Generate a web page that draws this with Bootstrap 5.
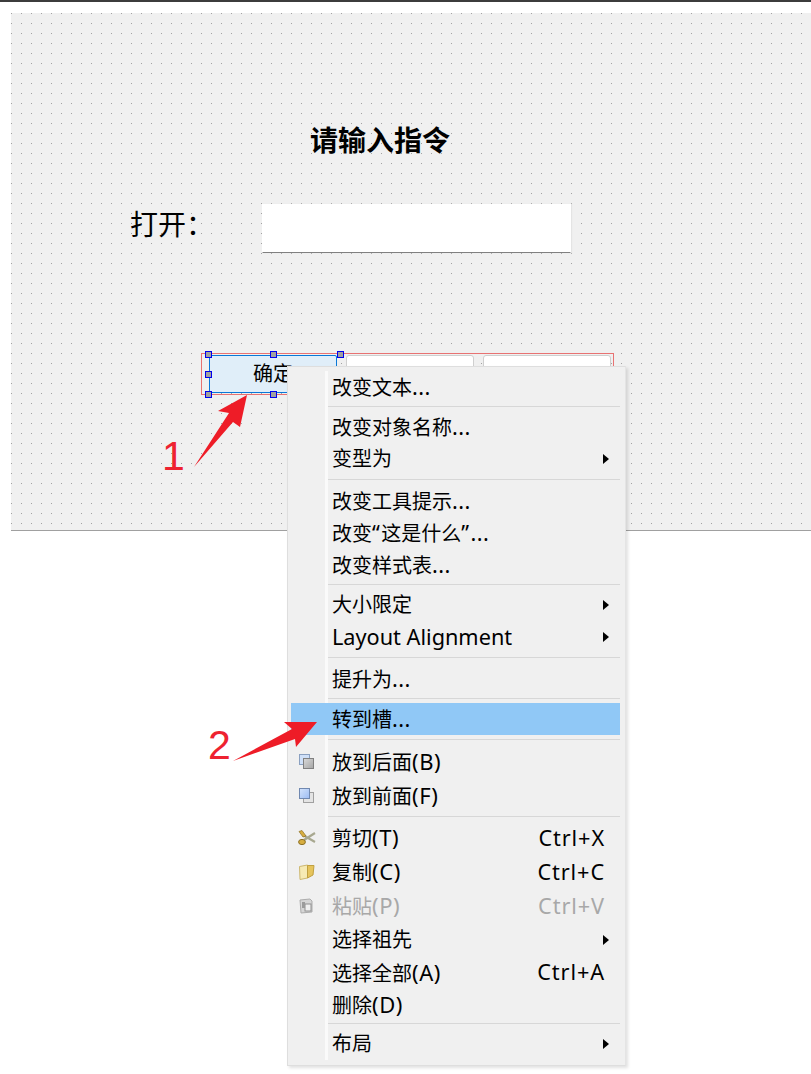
<!DOCTYPE html>
<html lang="zh-CN">

<head>
  <meta charset="UTF-8">
  <meta name="viewport" content="width=device-width, initial-scale=1">
  <link href="https://cdn.jsdelivr.net/npm/bootstrap@5.3.3/dist/css/bootstrap.min.css" rel="stylesheet">
  <script src="https://cdn.jsdelivr.net/npm/bootstrap@5.3.3/dist/js/bootstrap.bundle.min.js"></script>
  <title>转到槽</title>
  <style>
    body { background: #fff; color: #000; font-family: "Noto Sans", "Noto Sans CJK SC", sans-serif; font-size: 20px; position: relative; height: 1074px; overflow: hidden; }
    .top-line { height: 2px; background: #3c3c3c; }
    .form-canvas { margin: 11px 0 0 11px; height: 518px; background-color: #f0f0f0; background-image: conic-gradient(at 1px 1px, transparent 75%, #a2a2a2 0); background-size: 10px 10px; border-bottom: 1px solid #a0a0a0; padding-top: 103px; }
    .form-title { padding-left: 299px; height: 46px; line-height: 46px; font-size: 28px; font-weight: 700; font-family: "Noto Sans CJK SC", sans-serif; }
    .open-row { margin-top: 42px; padding-left: 119px; height: 49px; }
    .open-label { width: 132px; font-size: 28px; line-height: 38px; font-family: "Noto Sans CJK SC", sans-serif; }
    .open-input { width: 309px; height: 49px; background: #fff; border: 1px solid #fff; border-bottom-color: #808080; box-shadow: 1px 0 1px #e4e4e4; }
    .btn-group-box { position: relative; margin: 100px 0 0 190px; width: 413px; height: 42px; border: 1px solid #e87272; padding: 1px 1px 0 7px; gap: 9px; }
    .qt-btn { width: 128px; height: 38px; background: #fff; border: 1px solid #cfcfcf; border-radius: 3px; line-height: 36px; text-align: center; }
    .qt-btn.picked { background: #e0eef9; border-color: #0a78d7; border-radius: 2px; }
    .handle { position: absolute; width: 7px; height: 7px; background: #a0a0a0; border: 1px solid #0000ee; }
    .ctx-menu { position: absolute; left: 287px; top: 366px; width: 339px; height: 700px; background: #f0f0f0; border: 1px solid #dedede; border-right-color: #e4e4e4; padding: 4px 5px 0 3px; box-shadow: 2px 2px 3px rgba(0, 0, 0, .12); }
    .ctx-gutter { position: absolute; left: 37px; top: 4px; bottom: 5px; width: 3px; background: #fafafa; }
    .ctx-item { position: relative; height: 32px; line-height: 32px; padding-left: 41px; padding-right: 16px; }
    .ctx-item.tall { height: 34px; line-height: 33px; }
    .ctx-item.mid { height: 33px; line-height: 33px; }
    .ctx-item.hot { background: #90c8f6; }
    .ctx-item.off { color: #a8a8a8; }
    .ctx-sep { height: 1px; background: #d7d7d7; margin: 3px 0 4px 37px; }
    .ctx-sep.wide { margin: 4px 0 5px 37px; }
    .ctx-caret { position: absolute; right: 11px; top: 50%; margin-top: -5px; width: 0; height: 0; border-left: 6px solid #000; border-top: 5px solid transparent; border-bottom: 5px solid transparent; }
    .ctx-icon { position: absolute; left: 7px; top: 8px; width: 18px; height: 18px; }
    .lat { font-size: 21.7px; }
    .lat-quote { font-size: 21.7px; letter-spacing: 1.5px; }
    .lat-dots { font-size: 21.7px; letter-spacing: .4px; }
    .lat-par { font-size: 22px; letter-spacing: .6px; }
    .lat-keys { font-size: 21.7px; letter-spacing: .9px; margin-right: -1px; }
    .marks { position: absolute; left: 0; top: 0; pointer-events: none; }
    .mark-num { position: absolute; color: #ee2230; font-family: "Liberation Sans", sans-serif; font-size: 41px; line-height: 1; }
  </style>
</head>

<body>
  <div class="top-line"></div>

  <div class="form-canvas">
    <div class="form-title">请输入指令</div>
    <div class="open-row d-flex">
      <div class="open-label">打开：</div>
      <div class="open-input"></div>
    </div>
    <div class="btn-group-box d-flex">
      <div class="qt-btn picked">确定</div>
      <div class="qt-btn"></div>
      <div class="qt-btn"></div>
      <span class="handle" style="left:3px;top:-3px"></span>
      <span class="handle" style="left:68px;top:-3px"></span>
      <span class="handle" style="left:135px;top:-3px"></span>
      <span class="handle" style="left:3px;top:17px"></span>
      <span class="handle" style="left:3px;top:37px"></span>
      <span class="handle" style="left:68px;top:37px"></span>
    </div>
  </div>

  <div class="ctx-menu">
    <div class="ctx-gutter"></div>
    <div class="ctx-item">改变文本<span class="lat-dots">...</span></div>
    <div class="ctx-sep"></div>
    <div class="ctx-item">改变对象名称<span class="lat-dots">...</span></div>
    <div class="ctx-item">变型为<span class="ctx-caret"></span></div>
    <div class="ctx-sep wide"></div>
    <div class="ctx-item">改变工具提示<span class="lat-dots">...</span></div>
    <div class="ctx-item">改变<span class="lat-quote">“</span>这是什么<span class="lat-quote">”</span><span class="lat-dots">...</span></div>
    <div class="ctx-item">改变样式表<span class="lat-dots">...</span></div>
    <div class="ctx-sep"></div>
    <div class="ctx-item">大小限定<span class="ctx-caret"></span></div>
    <div class="ctx-item"><span class="lat">Layout Alignment</span><span class="ctx-caret"></span></div>
    <div class="ctx-sep wide"></div>
    <div class="ctx-item">提升为<span class="lat-dots">...</span></div>
    <div class="ctx-sep"></div>
    <div class="ctx-item hot">转到槽<span class="lat-dots">...</span></div>
    <div class="ctx-sep wide"></div>
    <div class="ctx-item tall">
      <svg class="ctx-icon" viewBox="0 0 18 18"><defs><linearGradient id="g1" x1="0" y1="0" x2="1" y2="1"><stop offset="0" stop-color="#dadada"/><stop offset="1" stop-color="#a4a4a4"/></linearGradient></defs><rect x="1.5" y="1.5" width="10" height="10" fill="#cfe0f8" stroke="#8aa0c0"/><rect x="5.5" y="5.5" width="10" height="10" fill="url(#g1)" stroke="#808080"/></svg>
      放到后面<span class="lat-par">(B)</span>
    </div>
    <div class="ctx-item tall">
      <svg class="ctx-icon" viewBox="0 0 18 18"><defs><linearGradient id="g2" x1="0" y1="0" x2="1" y2="1"><stop offset="0" stop-color="#d4e4fc"/><stop offset="1" stop-color="#9cbcf4"/></linearGradient></defs><rect x="5.5" y="5.5" width="10" height="10" fill="#e4e4e4" stroke="#a0a0a0"/><rect x="1.5" y="1.5" width="10" height="10" fill="url(#g2)" stroke="#7088b0"/></svg>
      放到前面<span class="lat-par">(F)</span>
    </div>
    <div class="ctx-sep"></div>
    <div class="ctx-item tall d-flex justify-content-between">
      <svg class="ctx-icon" viewBox="0 0 18 18"><path d="M5 6 L17 13 M6 11 L17 4" fill="none" stroke="#a8a890" stroke-width="2.2"/><path d="M1 2.5 L4 1.5 L8 7 L5 8 Z" fill="#d8ae40" stroke="#8c7024" stroke-width=".7"/><ellipse cx="4" cy="13" rx="3.4" ry="2.6" fill="#d8ae40" stroke="#8c7024"/></svg>
      <span>剪切<span class="lat-par">(T)</span></span><span class="lat-keys">Ctrl+X</span>
    </div>
    <div class="ctx-item tall d-flex justify-content-between">
      <svg class="ctx-icon" viewBox="0 0 18 18"><path d="M1.5 3.5 L9.5 2 L9.5 15 L2 16.5 Z" fill="#f6eab4" stroke="#cdb870"/><path d="M9.5 2.5 L16 2.5 L15 12 L9.5 15 Z" fill="#e6c45c" stroke="#c0a040"/></svg>
      <span>复制<span class="lat-par">(C)</span></span><span class="lat-keys">Ctrl+C</span>
    </div>
    <div class="ctx-item tall off d-flex justify-content-between">
      <svg class="ctx-icon" viewBox="0 0 18 18"><path d="M2 3 L12 2 L14 4 L14 15 L3 16 Z" fill="#d6d6d6" stroke="#acacac"/><rect x="7" y="7" width="6" height="7" fill="#f0f0f0" stroke="#909090"/><rect x="4" y="5" width="3" height="6" fill="#9c9c9c"/></svg>
      <span>粘贴<span class="lat-par">(P)</span></span><span class="lat-keys">Ctrl+V</span>
    </div>
    <div class="ctx-item mid">选择祖先<span class="ctx-caret"></span></div>
    <div class="ctx-item d-flex justify-content-between"><span>选择全部<span class="lat-par">(A)</span></span><span class="lat-keys">Ctrl+A</span></div>
    <div class="ctx-item">删除<span class="lat-par">(D)</span></div>
    <div class="ctx-sep"></div>
    <div class="ctx-item">布局<span class="ctx-caret"></span></div>
  </div>

  <svg class="marks" width="811" height="1074" viewBox="0 0 811 1074">
    <polygon points="247,395 218,411 229,413 194,467 233,422 240,427" fill="#ee1c27"/>
    <polygon points="317,722 284,722 292,729 233,761 295,739 296,747" fill="#ee1c27"/>
  </svg>
  <span class="mark-num" style="left:162px;top:436px">1</span>
  <span class="mark-num" style="left:208px;top:725px">2</span>
</body>

</html>
